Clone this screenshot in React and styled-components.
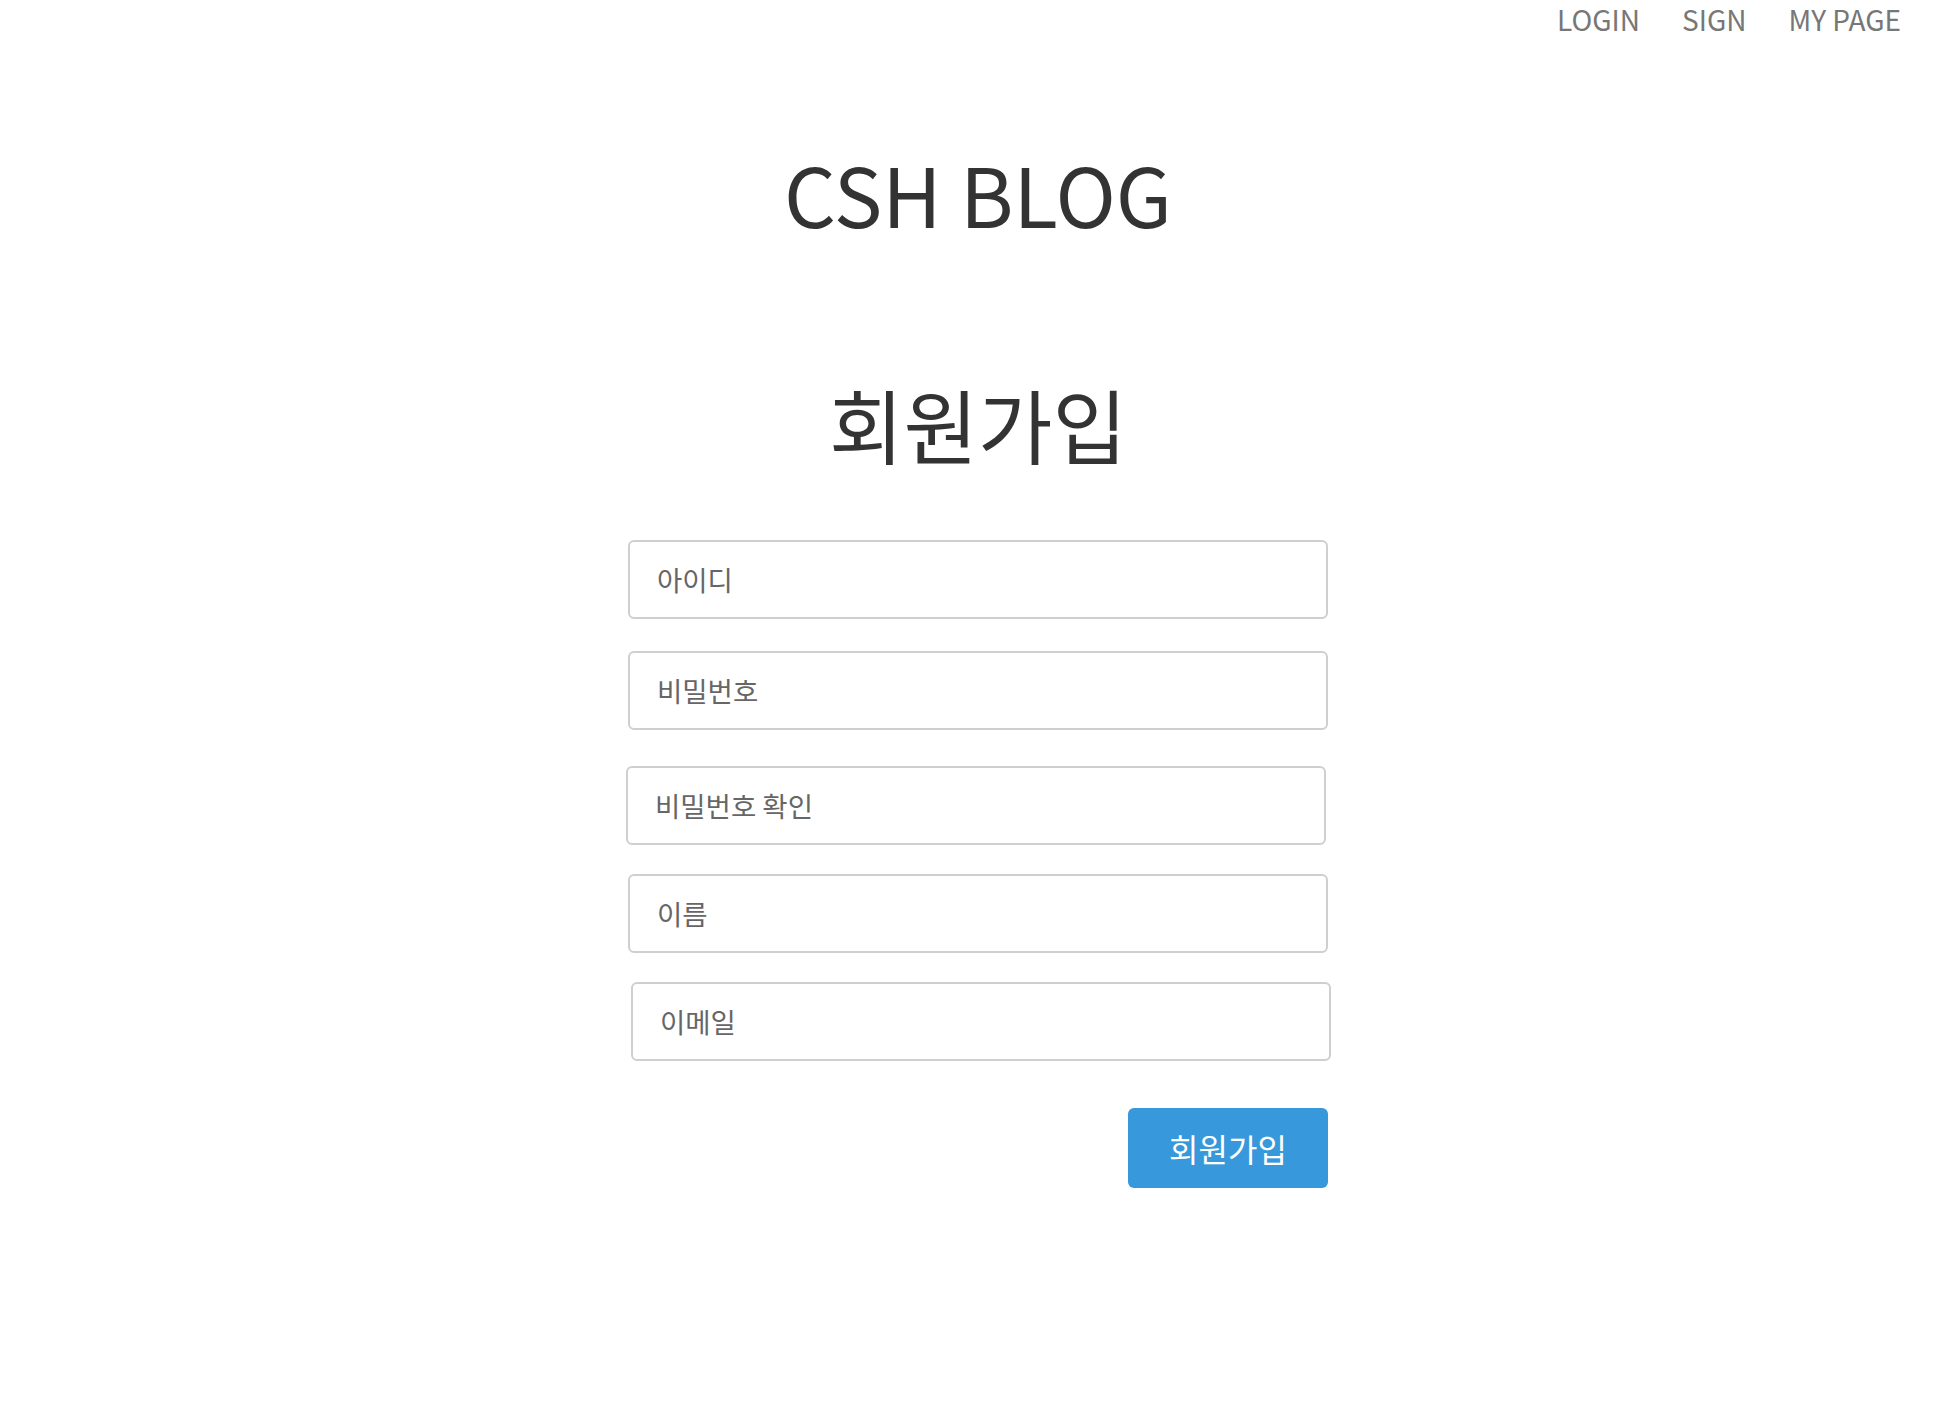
import React from "react";
import styled, { createGlobalStyle } from "styled-components";

const Global = createGlobalStyle`
  html, body { margin: 0; padding: 0; background: #fff; }
  body { font-family: "Noto Sans CJK KR", "Noto Sans", sans-serif; color: #333; }
  * { box-sizing: border-box; }
`;

const Page = styled.div`
  display: flex;
  flex-direction: column;
  align-items: center;
  min-height: 1404px;
`;

const Nav = styled.nav`
  align-self: stretch;
  display: flex;
  justify-content: flex-end;
  gap: 42px;
  padding: 0 55px 0 0;
  height: 38px;
  align-items: center;
`;

const NavLink = styled.a`
  font-size: 28px;
  color: #777;
  text-decoration: none;
  line-height: 1;
`;

const Logo = styled.h1`
  margin: 114px 0 0;
  font-size: 81.5px;
  font-weight: 400;
  line-height: 1;
  color: #333;
`;

const Heading = styled.h2`
  margin: 148px 0 0;
  font-size: 81px;
  font-weight: 400;
  line-height: 1;
  color: #333;
`;

const Form = styled.form`
  width: 700px;
  display: flex;
  flex-direction: column;
  margin-top: 77px;
`;

const Field = styled.input`
  width: 700px;
  height: 79px;
  margin-top: ${(p) => p.$top}px;
  margin-left: ${(p) => p.$shift || 0}px;
  padding: 0 27px;
  border: 2px solid #cfcfcf;
  border-radius: 6px;
  background: #fff;
  font-family: "Noto Sans CJK KR", sans-serif;
  font-size: 27.5px;
  color: #333;
  outline: none;
  &::placeholder { color: #666; }
`;

const Actions = styled.div`
  display: flex;
  justify-content: flex-end;
  margin-top: 47px;
`;

const Submit = styled.button`
  width: 200px;
  height: 80px;
  border: none;
  border-radius: 6px;
  background: #3799db;
  color: #fff;
  font-family: "Noto Sans CJK KR", sans-serif;
  font-size: 32px;
  cursor: pointer;
`;

const fields = [
  { ph: "아이디", top: 0, shift: 0 },
  { ph: "비밀번호", top: 32, shift: 0 },
  { ph: "비밀번호 확인", top: 36, shift: -2 },
  { ph: "이름", top: 29, shift: 0 },
  { ph: "이메일", top: 29, shift: 3 },
];

export default function App() {
  return (
    <>
      <Global />
      <Page>
        <Nav>
          <NavLink href="#">LOGIN</NavLink>
          <NavLink href="#">SIGN</NavLink>
          <NavLink href="#">MY PAGE</NavLink>
        </Nav>
        <Logo>CSH BLOG</Logo>
        <Heading>회원가입</Heading>
        <Form onSubmit={(e) => e.preventDefault()}>
          {fields.map((f) => (
            <Field key={f.ph} placeholder={f.ph} $top={f.top} $shift={f.shift} />
          ))}
          <Actions>
            <Submit type="submit">회원가입</Submit>
          </Actions>
        </Form>
      </Page>
    </>
  );
}
